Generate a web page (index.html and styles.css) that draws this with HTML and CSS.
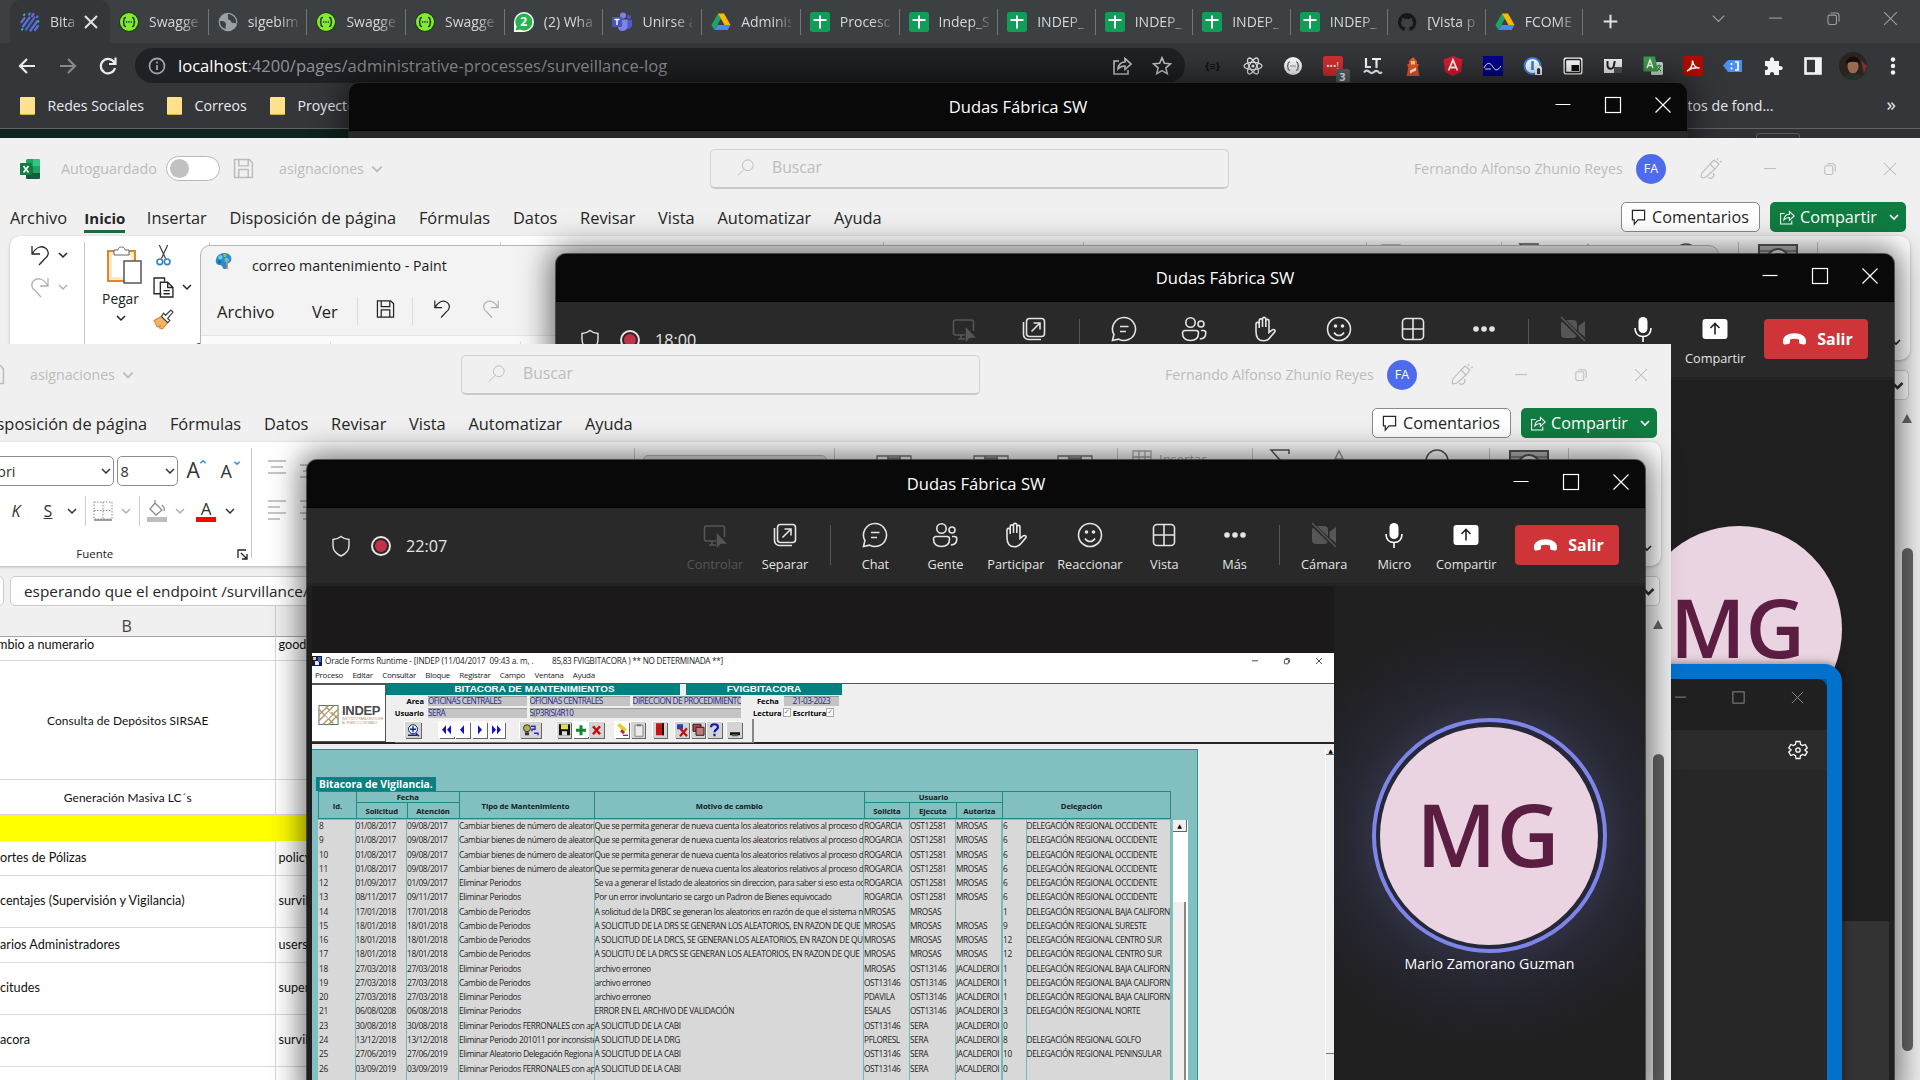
FILE: index.html
```html
<!DOCTYPE html>
<html lang="es">
<head>
<meta charset="utf-8">
<title>Bitácora de vigilancia</title>
<link rel="stylesheet" href="styles.css">
</head>
<body>
<svg class="defs" aria-hidden="true">
  <symbol id="min" viewBox="0 0 20 20"><path d="M2.5 9.5h15"/></symbol>
  <symbol id="max" viewBox="0 0 20 20"><rect x="2.5" y="2.5" width="15" height="15"/></symbol>
  <symbol id="close" viewBox="0 0 20 20"><path d="M2.5 2.5l15 15M17.500 2.500l-15 15"/></symbol>
  <symbol id="restore" viewBox="0 0 20 20"><rect x="3.500" y="6" width="10" height="11" rx="2"/><path d="M6.500 3.500h7a3 3 0 0 1 3 3v7"/></symbol>
  <symbol id="chev" viewBox="0 0 12 12"><path d="M2 4l4 4 4-4"/></symbol>
  <symbol id="back" viewBox="0 0 20 20"><path d="M18 10H3M10 3l-7 7 7 7"/></symbol>
  <symbol id="reload" viewBox="0 0 20 20"><path d="M16.500 7A7.200 7.200 0 1 0 17 12M17.500 1.500v6.500h-6.500"/></symbol>
  <symbol id="info" viewBox="0 0 20 20"><circle cx="10" cy="10" r="7.500"/><path d="M10 9v5M10 5.500v2"/></symbol>
  <symbol id="share" viewBox="0 0 20 20"><path d="M7 5H2v13h14v-4M6 13c0-5 4-7 7-7V2.500l6 5.500-6 5.500V10c-3 0-5 .5-7 3z"/></symbol>
  <symbol id="star" viewBox="0 0 20 20"><path d="M10 1.800l2.400 5.500 6 .5-4.500 4 1.300 5.900L10 14.600l-5.200 3.100 1.300-5.900-4.500-4 6-.5z"/></symbol>
  <symbol id="undo" viewBox="0 0 20 22"><path d="M2 2v8h8M2.500 9.500C6 3 12 1 16 4.500s2 8-1 10L9 21"/></symbol>
  <symbol id="redo" viewBox="0 0 20 22"><path d="M18 2v8h-8M17.500 9.500C14 3 8 1 4 4.500s-2 8 1 10L11 21"/></symbol>
  <symbol id="save" viewBox="0 0 20 20"><path d="M1.500 1.500h14l3 3v14h-17zM5.500 1.500v6h9v-6M5.500 18v-7h9v7"/></symbol>
  <symbol id="search" viewBox="0 0 20 20"><circle cx="12" cy="7.500" r="6"/><path d="M8 12l-7 7"/></symbol>
  <symbol id="pen" viewBox="0 0 22 22"><path d="M10 6l5 5-9 8-4 1-1-1 1-4zM10 6l4-4M15 11l4-5-5-4M8 19a3 3 0 0 0 5-4M17 2l1-2M20 4l2-1"/></symbol>
  <symbol id="bubble" viewBox="0 0 16 18"><path d="M1.500 1.500h13v10h-7l-4 4.500v-4.500h-2z"/></symbol>
  <symbol id="shield" viewBox="0 0 20 22"><path d="M10 1.500c2.500 2 5 3 8 3v6c0 5-3.500 8.500-8 10.500C5.500 19 2 15.500 2 10.500v-6c3 0 5.500-1 8-3z"/></symbol>
  <symbol id="control" viewBox="0 0 26 26"><path d="M14 19H4.500a2 2 0 0 1-2-2V6a2 2 0 0 1 2-2h16a2 2 0 0 1 2 2v9M10 19v4M7 23h7"/><path d="M15.500 13v11l3-3h4.500z" fill="currentColor"/></symbol>
  <symbol id="popout" viewBox="0 0 26 26"><rect x="5.500" y="2.500" width="18" height="18" rx="3"/><path d="M2.500 6v12.500a5 5 0 0 0 5 5H20M10.500 15.500l8-8M12.500 7h6.500v6.500"/></symbol>
  <symbol id="chat" viewBox="0 0 26 26"><path d="M13 1.500a11.500 11.500 0 1 1-5.500 21.600L1.500 24.500l1.400-6A11.500 11.500 0 0 1 13 1.500zM9 10.500h8.500M9 15.500h6"/></symbol>
  <symbol id="people" viewBox="0 0 26 26"><circle cx="9.500" cy="6.500" r="4.700"/><circle cx="20" cy="8" r="3"/><path d="M1.500 17a2.500 2.500 0 0 1 2.500-2.500h11a2.500 2.500 0 0 1 2.500 2.500c0 5-3 7.500-8 7.500s-8-2.500-8-7.500zM20 14.500h2.500a2.300 2.300 0 0 1 2.300 2.300c0 4-2 6.200-6 6.200"/></symbol>
  <symbol id="hand" viewBox="0 0 26 26"><path d="M4 15.500V8a1.600 1.600 0 0 1 3.200 0v4V4.500a1.600 1.600 0 0 1 3.300 0V11 3a1.600 1.600 0 0 1 3.300 0v8V5a1.600 1.600 0 0 1 3.200 0v11.500l3.200-2.600c1.400-1 3.300 0 2.800 1.600L18 21.500c-1.500 2.300-3.500 3.200-6.500 3.200-5 0-7.500-3-7.500-9.200z"/></symbol>
  <symbol id="smile" viewBox="0 0 26 26"><circle cx="13" cy="13" r="11.500"/><path d="M8 16.500c2.500 4 7.500 4 10 0"/><circle cx="9.500" cy="10" r="1" fill="currentColor"/><circle cx="16.500" cy="10" r="1" fill="currentColor"/></symbol>
  <symbol id="gridview" viewBox="0 0 26 26"><rect x="2.500" y="2.500" width="21" height="21" rx="3.500"/><path d="M13 2.500v21M2.500 13h21"/></symbol>
  <symbol id="dots" viewBox="0 0 26 26"><g fill="currentColor" stroke="none"><circle cx="5" cy="13" r="2.800"/><circle cx="13" cy="13" r="2.800"/><circle cx="21" cy="13" r="2.800"/></g></symbol>
  <symbol id="camera" viewBox="0 0 26 26"><path d="M4 4h9a4 4 0 0 1 4 4v10a4 4 0 0 1-4 4H5a4 4 0 0 1-4-4V7zM18.500 10L25 5v16l-6.500-5z" fill="currentColor" stroke="none"/><path d="M1 2l24 23" stroke="#292929" stroke-width="4"/><path d="M1 1l24 24"/></symbol>
  <symbol id="mic" viewBox="0 0 26 26"><rect x="8.500" y="1" width="9" height="16" rx="4.500" fill="currentColor" stroke="none"/><path d="M5 12c0 5 3 8.500 8 8.500s8-3.500 8-8.500M13 21v5"/></symbol>
  <symbol id="upload" viewBox="0 0 26 26"><rect x="0.500" y="3" width="25" height="20" rx="3" fill="#fff" stroke="none"/><path d="M13 18.500V8M8.500 12L13 7.500l4.500 4.500" stroke="#222"/></symbol>
  <symbol id="hangup" viewBox="0 0 26 14"><path d="M13 1C6 1 1 4.500 1 9c0 3 .8 4 2.500 3.800l3-.6c1.300-.3 1.700-1 1.800-2.200V7.500c3-1 6.400-1 9.400 0V10c.1 1.200.5 1.900 1.800 2.200l3 .6C24.200 13 25 12 25 9c0-4.500-5-8-12-8z" fill="#fff" stroke="none"/></symbol>
  <symbol id="gear" viewBox="0 0 20 20"><path d="M8 1.500h4l.5 2.800 2 1.200 2.700-1 2 3.500-2.200 1.800v.4l2.200 1.800-2 3.500-2.700-1-2 1.200-.5 2.800H8l-.5-2.800-2-1.200-2.700 1-2-3.500L3 10.200v-.4L.8 8l2-3.500 2.700 1 2-1.200z"/><circle cx="10" cy="10" r="2.200"/></symbol>
  <symbol id="excel" viewBox="0 0 20 20"><rect x="6" width="14" height="20" rx="1.500" fill="#21a366"/><path d="M13 0h5.500A1.500 1.500 0 0 1 20 1.500V7h-7z" fill="#33c481"/><path d="M6 7h7v7H6z" fill="#107c41"/><path d="M6 14h14v4.500a1.500 1.500 0 0 1-1.500 1.500h-11A1.500 1.500 0 0 1 6 18.500z" fill="#185c37"/><rect y="4" width="12" height="12" rx="1" fill="#107c41"/><path d="M3.500 7l5 6.500M8.500 7l-5 6.500" stroke="#fff" stroke-width="1.700"/></symbol>
  <symbol id="swagger" viewBox="0 0 20 20"><circle cx="10" cy="10" r="10" fill="#1c3d10"/><circle cx="10" cy="10" r="9" fill="#85ea2d"/><path d="M7 5.500c-1.500 0-2 .6-2 2s0 2.500-1.200 2.500C5 10 5 11 5 12.500s.5 2 2 2M13 5.500c1.500 0 2 .6 2 2s0 2.500 1.200 2.500C15 10 15 11 15 12.500s-.5 2-2 2M7 10h1.300M9.300 10h1.400M11.700 10H13" stroke="#173647" stroke-width="1.400"/></symbol>
  <symbol id="globe" viewBox="0 0 20 20"><circle cx="10" cy="10" r="9.300" fill="#9aa0a6"/><path d="M2 9c4-.5 6 1 6 3s-1 2 0 5c-4-1-6.500-4-6-8zM10 2c-1 2 1 3 0 4.500s3 1 3 3 3 1 5 2c1-5-3-9-8-9.500z" fill="#3c4043"/></symbol>
  <symbol id="bita" viewBox="0 0 20 20"><g stroke-width="2.200" stroke-linecap="round"><path d="M1.500 10l3-4M3 14.500l6.500-9M9 2.500l1-1" stroke="#5b6fd8"/><path d="M6 17.500l8.500-12" stroke="#4c63d9"/><path d="M10.500 18.500l6.500-9" stroke="#5b6fd8"/><path d="M12 4l1.500-2M17 5l.5-.7M15 18l3-4" stroke="#5b6fd8"/><path d="M18 9.500l.3-.4M4 3l.4-.5M2 17.500l.3-.3" stroke="#28b7a0"/></g></symbol>
  <symbol id="whatsapp" viewBox="0 0 20 20"><path d="M0 20V10a10 10 0 1 1 10 10z" fill="#fff"/><path d="M1.500 18.500l1.200-4A8.500 8.500 0 1 1 6 17.500z" fill="#25b34b"/></symbol>
  <symbol id="teams" viewBox="0 0 20 20"><circle cx="11" cy="3.500" r="3" fill="#7b83eb"/><circle cx="17" cy="5" r="2" fill="#5059c9"/><path d="M14 8h6v6a4 4 0 0 1-6 2z" fill="#5059c9"/><path d="M6 7.500h9.500V15a5 5 0 0 1-9.500 1z" fill="#7b83eb"/><rect y="5" width="10" height="10" rx="1" fill="#4b53bc"/><path d="M2.500 7.500h5M5 7.500v5.500" stroke="#fff" stroke-width="1.400"/></symbol>
  <symbol id="drive" viewBox="0 0 20 20"><path d="M7 1.500L0.500 13l3 5L10 6.500z" fill="#1fa463"/><path d="M7 1.500h6L19.500 13h-6z" fill="#ffba00"/><path d="M3.500 18l3-5h13l-3 5z" fill="#4688f4"/></symbol>
  <symbol id="sheets" viewBox="0 0 20 20"><rect width="20" height="20" rx="2.500" fill="#0f9d58"/><path d="M10 3.500v13M3.500 8h13" stroke="#fff" stroke-width="2"/></symbol>
  <symbol id="github" viewBox="0 0 20 20"><path d="M10 1a9.300 9.300 0 0 0-3 18c.5.100.7-.2.700-.5v-1.800c-2.600.6-3.200-1.100-3.200-1.100.9.300 1.500 1.800 3.400 1.200 0-.8.300-1.100.5-1.300-2.500-.3-4.300-1.300-4.300-4.400 0-1 .4-1.900 1-2.500-.1-.3-.4-1.300.1-2.600 0 0 .9-.2 2.600 1a9 9 0 0 1 4.600 0c1.700-1.200 2.600-1 2.600-1 .5 1.300.2 2.300.1 2.600.6.600 1 1.500 1 2.500 0 3.100-1.900 4.100-4.300 4.400.4.300.7.900.7 1.800v1.200c0 .3.200.6.700.5A9.300 9.300 0 0 0 10 1z" fill="#15181b"/></symbol>
</svg>

<main class="desktop">
  <section class="chrome">
    <div class="tabstrip">
      <div class="tab tab-active"><svg class="ico20"><use href="#bita"/></svg><span class="tab-text">Bita</span><svg class="ico16 line tab-x"><use href="#close"/></svg></div>
      <div class="tabs" id="tabs"></div>
      <svg class="plus line" viewBox="0 0 20 20"><path d="M10 2v16M2 10h16"/></svg>
      <div class="chrome-ctl">
        <svg class="line"><use href="#chev"/></svg><svg class="line"><use href="#min"/></svg><svg class="line"><use href="#restore"/></svg><svg class="line"><use href="#close"/></svg>
      </div>
    </div>
    <div class="navbar">
      <svg class="nav line"><use href="#back"/></svg>
      <svg class="nav line nav-fwd"><use href="#back"/></svg>
      <svg class="nav line"><use href="#reload"/></svg>
      <div class="omnibox">
        <svg class="ico20 line dim"><use href="#info"/></svg>
        <span class="url"><b>localhost</b>:4200/pages/administrative-processes/surveillance-log</span>
        <svg class="ico20 line omni-share"><use href="#share"/></svg>
        <svg class="ico20 line omni-star"><use href="#star"/></svg>
      </div>
      <div class="exts">
        <span class="ext ext-json">{≡}</span>
        <svg class="ext" viewBox="0 0 20 20"><g fill="none" stroke="#e8eaed" stroke-width="1.300"><ellipse cx="10" cy="10" rx="9" ry="3.600"/><ellipse cx="10" cy="10" rx="9" ry="3.600" transform="rotate(60 10 10)"/><ellipse cx="10" cy="10" rx="9" ry="3.600" transform="rotate(120 10 10)"/></g><circle cx="10" cy="10" r="1.600" fill="#e8eaed"/></svg>
        <svg class="ext" viewBox="0 0 20 20"><circle cx="10" cy="10" r="9" fill="#fff"/><path d="M7 6c-1.500 0-2 .6-2 2s0 2-1 2c1 0 1 1 1 2.300s.5 1.900 2 1.900M13 6c1.500 0 2 .6 2 2s0 2 1 2c-1 0-1 1-1 2.300s-.5 1.900-2 1.900M7.500 10h1M9.500 10h1M11.500 10h1" fill="none" stroke="#333"/></svg>
        <span class="ext ext-red">•••!<i class="badge">3</i></span>
        <svg class="ext" viewBox="0 0 20 20"><path d="M3 2v9h5M9 3h9M13.500 3v9M1 16.500c2-3 4-2 5.500-.5s3 1.500 4.500 0 3.500-1.500 4.500 0 2 1.500 3.500 0" fill="none" stroke="#fff" stroke-width="2.200"/></svg>
        <svg class="ext" viewBox="0 0 20 20"><path d="M6 5l4-4 4 4v3h1.500v2.500H14.500L16.500 20h-13l2-9.500H4.500V8H6z" fill="#f05a28"/><path d="M7 14.500l6-3v3l-6 3z" fill="#fff"/><rect x="8" y="5" width="4" height="3.500" fill="#ffd27a"/></svg>
        <svg class="ext" viewBox="0 0 20 20"><path d="M10 0l9.500 3.500L18 16l-8 4-8-4L.5 3.500z" fill="#dd1b2f"/><path d="M5.500 14.500L10 4l4.500 10.500M7.500 11.500h5" fill="none" stroke="#fff" stroke-width="1.800"/></svg>
        <svg class="ext" viewBox="0 0 20 20"><rect width="20" height="20" fill="#00008c"/><path d="M1 12c3-6 6-6 9-1s5 3 8-1M2 13h6" fill="none" stroke="#fff"/></svg>
        <svg class="ext" viewBox="0 0 20 20"><circle cx="9.500" cy="10" r="8" fill="#fff" stroke="#3a86e8" stroke-width="2"/><path d="M9.500 5v9" stroke="#3a86e8" stroke-width="2.600"/><path d="M12 19v-6a3.500 3.500 0 0 1 7 0v6z" fill="#fff"/><path d="M14 13.500a1.600 1.600 0 0 1 3.200 0V18H14z" fill="#2a3a55"/></svg>
        <svg class="ext" viewBox="0 0 20 20"><rect x=".5" y="1.500" width="19" height="17" rx="2" fill="#fff"/><rect x="2.500" y="3.500" width="15" height="13" rx="1" fill="#fff" stroke="#222" stroke-width="1.400"/><rect x="8.500" y="9" width="7.500" height="6" fill="#111"/></svg>
        <svg class="ext" viewBox="0 0 20 20"><rect x="1" y="3" width="18" height="14" fill="#f1f1f1"/><path d="M4.500 5v4c0 5 6 5 6.500 0l.8-4" fill="none" stroke="#222" stroke-width="2"/><path d="M11 11h8v6h-8z" fill="#555"/></svg>
        <svg class="ext" viewBox="0 0 20 20"><rect x="8" y="6" width="12" height="13" rx="1.500" fill="#c9dfce"/><path d="M.5.500H12l3 15H.5z" fill="#3f9e4d"/><path d="M4 12L7 4l3 8M5 9.500h4" fill="none" stroke="#fff" stroke-width="1.400"/><path d="M13.500 10h5M16 8.500v1.500M14.500 15l3-5M14 11l4 4" stroke="#2b7d39"/></svg>
        <svg class="ext" viewBox="0 0 20 20"><rect width="20" height="20" rx="3" fill="#b30b00"/><path d="M4 15c3-1 6-6 5.500-10.500.5 5 4 8 7 7.500-4-.5-9 .5-12.500 3z" fill="none" stroke="#fff" stroke-width="1.500"/></svg>
        <svg class="ext" viewBox="0 0 20 20"><path d="M0 9.500l5-5.500h14v12H5z" fill="#4d8ff0"/><path d="M8.500 7v2M8.500 11.500v2M12 6h3v8h-3" fill="none" stroke="#fff" stroke-width="1.700"/></svg>
        <svg class="ext" viewBox="0 0 20 20"><path d="M2 5h5c-1-5 5-5 4 0h5v5c5-1 5 5 0 4v5h-5c1-4-5-4-4 0H2v-5c4 1 4-5 0-4z" fill="#f1f3f4"/></svg>
        <svg class="ext" viewBox="0 0 20 20"><rect x="2.500" y="2.500" width="15" height="15" fill="none" stroke="#f1f3f4" stroke-width="2.600"/><path d="M12 2h6v16h-6z" fill="#f1f3f4"/></svg>
        <svg class="ext ext-face" viewBox="0 0 28 28"><circle cx="14" cy="14" r="14" fill="#2b2320"/><path d="M22 8l6 6-3 8z" fill="#7a3328"/><ellipse cx="14" cy="14" rx="5.500" ry="7.500" fill="#9c6a50"/><path d="M7 12c0-10 14-10 14 0-3-3-10-3-14 0z" fill="#120e0d"/><path d="M5 25c4-5 14-5 18 0a14 14 0 0 1-18 0z" fill="#26302b"/></svg>
        <svg class="ext" viewBox="0 0 20 20"><g fill="#f1f3f4"><circle cx="10" cy="3.500" r="2.200"/><circle cx="10" cy="10" r="2.200"/><circle cx="10" cy="16.500" r="2.200"/></g></svg>
      </div>
    </div>
    <div class="bookmarks">
      <i class="folder"></i><span class="bm bm-a">Redes Sociales</span>
      <i class="folder"></i><span class="bm bm-b">Correos</span>
      <i class="folder"></i><span class="bm">Proyecto</span>
      <span class="bm bm-right">tos de fond...</span><span class="bm-more">»</span>
    </div>
    <div class="page-strip"><i class="page-green"></i><i class="page-box"></i></div>
  </section>

  <section class="win teams teams-back" data-teams="bar"></section>

  <section class="win excel excel-back" data-excel="back"></section>

  <section class="win paint">
    <div class="paint-title">
      <svg class="ico20" viewBox="0 0 20 20"><path d="M10 1c6 0 9 4 8 8s-4 3-4 5 0 5-3 5-2-3-4-4-5 0-6-4S4 1 10 1z" fill="#2c8ccb"/><circle cx="6" cy="6" r="2.300" fill="#5fd3e8"/><circle cx="11" cy="4" r="1.800" fill="#93c83e"/><circle cx="5" cy="11" r="1.800" fill="#1b5fa8"/><circle cx="13" cy="9" r="2.500" fill="#55c4f5"/><path d="M13 9l1 10" stroke="#e0913a" stroke-width="1.500"/></svg>
      <span>correo mantenimiento - Paint</span>
    </div>
    <div class="paint-menu">
      <span class="pm-a">Archivo</span><span class="pm-v">Ver</span><i></i><svg class="ico20 line"><use href="#save"/></svg><i></i><svg class="pm-arrow line"><use href="#undo"/></svg><svg class="pm-arrow line faint"><use href="#redo"/></svg>
    </div>
    <div class="paint-body"><i></i><i></i></div>
  </section>

  <section class="win teams teams-mid" data-teams="full">
    <div class="call">
      <div class="side side-plain">
        <div class="avatar">MG</div>
        <div class="tile"></div>
      </div>
    </div>
  </section>

  <section class="win snip">
    <div class="snip-title"><svg class="line"><use href="#min"/></svg><svg class="line"><use href="#max"/></svg><svg class="line"><use href="#close"/></svg></div>
    <div class="snip-bar"><svg class="ico20 line"><use href="#gear"/></svg></div>
  </section>

  <section class="win excel excel-front" data-excel="front"></section>

  <section class="win teams teams-front" data-teams="full">
    <div class="call">
      <div class="shared">
        <div class="oracle">
          <div class="o-title">
            <svg class="o-app" viewBox="0 0 10 10"><rect width="10" height="10" fill="#111a4a"/><path d="M1 1h3v3H1z" fill="#e8d33c"/><path d="M3 5h4v4H3z" fill="#e9e9e9"/><path d="M6 1h3v5H6z" fill="#3b62d9"/></svg>
            <span class="o-t1">Oracle Forms Runtime - [INDEP (11/04/2017&nbsp; 09:43 a. m, .</span><span>85,83 FVIGBITACORA ) ** NO DETERMINADA **]</span>
            <div class="o-ctl"><svg class="line"><use href="#min"/></svg><svg class="line"><use href="#restore"/></svg><svg class="line"><use href="#close"/></svg></div>
          </div>
          <div class="o-menu"><span>Proceso</span><span>Editar</span><span>Consultar</span><span>Bloque</span><span>Registrar</span><span>Campo</span><span>Ventana</span><span>Ayuda</span></div>
          <div class="o-head">
            <div class="o-logo">
              <svg viewBox="0 0 22 22"><rect x="1" y="1" width="20" height="20" fill="#fff" stroke="#4f6f60"/><path d="M1 11L11 1M1 17L17 1M5 21L21 5M11 21l10-10M1 5l7 7M14 8l7 7M8 2l4 4M11 15l5 5" stroke="#b5976a" stroke-width="1.500"/><path d="M7 11l4-4 4 4-4 4z" fill="#fff" stroke="#b5976a"/></svg>
              <div><b>INDEP</b><small>INSTITUTO PARA DEVOLVER<br>AL PUEBLO LO ROBADO</small></div>
            </div>
            <div class="o-info">
              <div class="o-bands"><b class="band-a">BITACORA DE MANTENIMIENTOS</b><b class="band-b">FVIGBITACORA</b></div>
              <div class="o-fields">
                <b class="lb lb-1">Area</b><span class="fd f1">OFICINAS CENTRALES</span><span class="fd f2">OFICINAS CENTRALES</span><span class="fd f3">DIRECCION DE PROCEDIMIENTO</span><b class="lb lb-2">Fecha</b><span class="fd f4">21-03-2023</span>
              </div>
              <div class="o-fields">
                <b class="lb lb-1">Usuario</b><span class="fd f1">SERA</span><span class="fd f5">S(P3R(S(4R10</span><b class="lb lb-3">Lectura</b><i class="cb">✓</i><b class="lb">Escritura</b><i class="cb">✓</i>
              </div>
              <div class="o-tools" id="tools"></div>
            </div>
          </div>
          <div class="o-body">
            <div class="o-pane">
              <b class="o-label">Bitacora de Vigilancia.</b>
              <div class="o-grid-head">
                <b class="h-id">Id.</b><b class="h-fe">Fecha</b><b class="h-so">Solicitud</b><b class="h-at">Atención</b><b class="h-ti">Tipo de Mantenimiento</b><b class="h-mo">Motivo de cambio</b><b class="h-us">Usuario</b><b class="h-s2">Solicita</b><b class="h-ej">Ejecuta</b><b class="h-au">Autoriza</b><b class="h-de">Delegación</b>
              </div>
              <div class="o-list"><div class="o-rows" id="rows"></div><div class="o-scroll"><i class="up">▲</i><i class="thumb"></i></div></div>
            </div>
            <div class="o-outer"><i class="up">▲</i><i class="thumb"></i></div>
          </div>
        </div>
      </div>
      <div class="side">
        <div class="ring"><div class="avatar">MG</div></div>
        <span class="who">Mario Zamorano Guzman</span>
      </div>
    </div>
  </section>
</main>
<script src="script.js"></script>
</body>
</html>
```
FILE: styles.css
```css
* { box-sizing: border-box; }
body { margin: 0; background: #1f1f1f; font-family: "Open Sans", "Noto Sans", sans-serif; }
.defs { position: absolute; width: 0; height: 0; }
svg { display: block; flex: none; fill: none; }
svg symbol, svg use { overflow: visible; }
.line { stroke: currentColor; stroke-width: 1.3; }
.ico20 { width: 20px; height: 20px; }
.ico16 { width: 16px; height: 16px; }
.desktop { position: relative; width: 1920px; height: 1080px; overflow: hidden; white-space: nowrap; }
.win { position: absolute; overflow: hidden; }

/* Browser */
.chrome { height: 138px; background: #35363a; color: #dfe1e5; }
.tabstrip { display: flex; align-items: center; height: 43px; background: #3c4043; font-size: 14px; padding-left: 10px; }
.tab { display: flex; align-items: center; width: 98.700px; height: 26px; border-right: 1px solid #70757a; padding-left: 9px; }
.tab:nth-child(n+10) { width: 97.500px; }
.tab .tab-text { margin-left: 10px; width: 50px; overflow: hidden; color: #d5d7da; -webkit-mask-image: linear-gradient(90deg, #000 65%, rgba(0, 0, 0, .2)); }
.tab-active { height: 43px; width: 100px; background: #35363a; border: 0; border-radius: 10px 10px 0 0; padding-left: 10px; }
.tab-active .tab-text { width: 26px; }
.tab-x { margin-left: 7px; stroke-width: 2.6; }
.tabs { display: flex; }
.wa { display: flex; align-items: center; justify-content: center; width: 20px; height: 20px; }
.wa b { position: absolute; color: #fff; font-size: 12px; }
.plus { width: 17px; height: 17px; margin-left: 19px; stroke-width: 2.4; }
.chrome-ctl { display: flex; margin-left: auto; padding: 0 0 6px; color: #9a9ea1; }
.chrome-ctl svg { width: 17px; height: 17px; margin-right: 40.5px; }
.chrome-ctl svg:first-child { stroke-width: .9; }
.chrome-ctl svg:last-child { margin-right: 21px; }
.navbar { display: flex; align-items: center; height: 45px; padding-left: 17px; }
.nav { width: 20px; height: 20px; margin-right: 20.5px; stroke-width: 2.2; color: #e8eaed; }
.nav-fwd { transform: scaleX(-1); color: #87898c; }
.omnibox { display: flex; align-items: center; width: 1050px; height: 35px; margin-left: -3.500px; border-radius: 18px; background: #202124; padding-left: 12px; }
.dim { color: #9aa0a6; stroke-width: 1.8; }
.url { margin-left: 11px; font-size: 16.6px; color: #8f9398; width: 932px; }
.url b { font-weight: 400; color: #fff; }
.omni-share, .omni-star { color: #c6c9cc; stroke-width: 1.6; }
.omni-share { margin-left: 2px; }
.omni-star { margin-left: 20px; }
.exts { display: flex; margin-left: 7.500px; align-items: center; }
.ext { width: 20px; height: 20px; margin: 0 10px; }
.ext-json { color: #111; font-size: 11px; font-weight: 700; line-height: 20px; text-align: center; }
.ext-red { position: relative; border-radius: 3px; background: #d3302f; color: #fff; font-size: 9px; line-height: 19px; text-align: center; }
.badge { position: absolute; right: -7px; top: 13px; width: 14px; height: 15px; border-radius: 3px; background: #5f6368; font: 700 11px/15px "Open Sans", sans-serif; }
.ext-face { width: 28px; height: 28px; margin: 0 6px; }
.bookmarks { display: flex; align-items: center; height: 40px; padding: 0 0 5px 20px; font-size: 14.15px; color: #e8eaed; }
.folder { width: 15px; height: 18px; background: linear-gradient(135deg, #fce397, #ffe082); border-bottom: 1px solid #dcae3c; border-radius: 1px; }
.bm { margin-left: 12.500px; }
.bm-a { width: 119.500px; }
.bm-b { width: 75.500px; }
.bm-right { margin-left: auto; width: 87px; }
.bm-more { margin: -3px 24px 0 112px; font-size: 19px; }
.page-strip { display: flex; height: 10px; border-top: 1px solid #5f6368; background: #2e3033; }
.page-green { width: 349px; background: #0c231f; }
.page-box { margin: 4px 0 0 1407px; width: 44px; height: 12px; border: 1px solid #55585b; border-radius: 3px; }

/* Meeting windows */
.teams { width: 1338px; border-radius: 10px 10px 0 0; background: #1f1f1f; color: #fff; box-shadow: 0 0 30px 6px rgba(0, 0, 0, .55), 0 0 0 1px rgba(60, 60, 60, .7); }
.teams-back { left: 349px; top: 83px; height: 60px; }
.teams-mid { left: 556px; top: 254px; height: 840px; }
.teams-front { left: 307px; top: 460px; height: 640px; }
.t-title { display: flex; align-items: center; height: 48px; background: #090909; border-bottom: 1px solid #000; font-size: 16.6px; }
.t-title span { flex: 1; text-align: center; padding-left: 150px; }
.t-title svg { width: 20px; height: 20px; margin: 0 14px 3px 16px; stroke-width: 1.2; }
.t-bar { display: flex; height: 75px; background: #292929; color: #e4e4e4; }
.t-left { display: flex; align-items: center; width: 373px; padding-left: 24px; font-size: 16.200px; }
.t-left svg { width: 20px; height: 22px; stroke-width: 1.4; }
.rec { width: 20px; height: 20px; margin: 0 15px 0 20px; border: 2px solid #e6e6e6; border-radius: 50%; background: #c4314b; box-shadow: inset 0 0 0 2px #292929; }
.t-btn { display: flex; flex-direction: column; align-items: center; width: 70px; padding-top: 14px; font-size: 12.75px; }
.t-btn svg { width: 26px; height: 26px; margin-bottom: 7px; stroke-width: 1.6; }
.t-off { color: #565656; }
.t-on svg { color: #fff; }
.w71 { width: 71px; }
.w76 { width: 77px; }
.w72 { width: 72px; }
.w68 { width: 68.500px; }
.w74 { width: 74px; }
.t-div { width: 1px; height: 40px; margin: 17px 9.700px 0; background: #565656; }
.t-leave { display: flex; align-items: center; width: 104px; height: 40px; margin: 17px 0 0 12px; padding-left: 18px; border-radius: 4px; background: #cf3438; color: #fff; font-weight: 700; font-size: 16px; }
.t-leave svg { width: 25px; height: 14px; margin-right: 10px; }
.call { display: flex; height: 560px; padding-left: 5px; border-top: 3px solid #242424; }
.side { width: 311px; display: flex; flex-direction: column; align-items: center; padding-top: 132px; background: radial-gradient(circle at 155px 249px, #333449 0, #2f3042 115px, #282834 140px, #222228 180px, #1f1f1f 225px); }
.ring { width: 235px; height: 235px; border: 4px solid #7f85e8; border-radius: 50%; padding: 4.500px; background: #262738; flex: none; margin-left: -1px; }
.avatar { width: 218px; height: 218px; border-radius: 50%; background: #ebd4e1; color: #5b1e42; font-weight: 600; font-size: 87px; line-height: 212px; text-align: center; padding-right: 2px; }
.who { margin-top: 1px; font-size: 14.2px; line-height: 20px; }
.side-plain { margin-left: 1022px; padding-top: 146px; background: none; }
.side-plain .avatar { width: 206px; height: 206px; line-height: 201px; font-size: 82px; flex: none; }
.tile { align-self: stretch; margin: 189px 5px 0 0; height: 170px; flex: none; background: #333; }

/* Snipping tool window */
.snip { left: 1600px; top: 664px; width: 242px; height: 440px; border: 15px solid #0072cd; border-radius: 18px; background: #272727; box-shadow: 0 0 8px rgba(0, 0, 0, .5); }
.snip::before { content: ""; position: absolute; inset: 0; border-radius: 9px; box-shadow: 0 0 8px rgba(0, 0, 0, .6), 0 0 0 12px #0072cd; pointer-events: none; }
.snip-title { display: flex; justify-content: flex-end; align-items: center; height: 51px; padding: 0 22.500px 15px 0; gap: 43.500px; background: #202020; color: #8a8a8a; border-radius: 9px 9px 0 0; }
.snip-title svg { width: 15px; height: 15px; }
.snip-bar { height: 40px; background: #2b2b2b; padding: 10px 19px 0 0; color: #fff; }
.snip-bar svg { margin-left: auto; }

/* Paint window */
.paint { left: 200px; top: 245px; width: 1519px; height: 120px; border: 1px solid #b7b7b7; border-radius: 10px 10px 0 0; background: #f3f3f3; color: #1b1b1b; }
.paint-title { display: flex; align-items: center; height: 38px; padding: 0 0 0 14px; font-size: 14.2px; }
.paint-title svg { width: 18px; height: 18px; margin-top: -9px; }
.paint-title span { margin: 0 0 0 19px; }
.paint-menu { display: flex; align-items: center; height: 52px; padding: 3px 0 0 16px; font-size: 16.5px; border-bottom: 1px solid #e3e3e3; color: #222; }
.pm-a { width: 95px; }
.pm-v { width: 45px; }
.paint-menu i { width: 1px; height: 28px; background: #dcdcdc; }
.paint-menu .ico20 { width: 19px; margin: -5px 17.500px 0; }
.pm-arrow { width: 18px; height: 21px; margin: -6px 11px 0 20px; }
.faint { color: #b0b0b0; }
.paint-body { display: flex; height: 40px; background: #fafafa; padding-top: 5px; }
.paint-body i { width: 1px; background: #ddd; margin-left: 129px; }
.paint-body i + i { margin-left: 189px; }

/* Spreadsheet windows */
.excel { width: 1920px; background: #f0f0f0; color: #262626; }
.excel-back { left: 0; top: 138px; height: 942px; }
.excel-front { left: -249px; top: 344px; height: 736px; }
.x-title { display: flex; align-items: center; height: 62px; padding: 0 0 1px 20px; color: #bcbcbc; font-size: 14.300px; }
.x-title .auto { width: 105px; margin-left: 21px; }
.toggle { width: 54px; height: 25px; border: 1px solid #b8b8b8; border-radius: 13px; background: #fff; padding: 2px 3px; }
.toggle i { display: block; width: 19px; height: 19px; border-radius: 50%; background: #c1c1c1; }
.x-save { width: 21px; height: 21px; margin: 0 25px 0 13px; stroke-width: 1.4; }
.x-name { width: 91px; font-size: 14.200px; }
.x-chev { width: 14px; height: 14px; stroke-width: 1.6; }
.x-search { display: flex; align-items: center; width: 519px; height: 40px; margin: 0 0 0 326px; padding: 0 0 2px 26px; border: 1px solid #d2d2d2; border-bottom: 2px solid #cacaca; border-radius: 5px; font-size: 15.700px; }
.x-search svg { width: 18px; height: 19px; margin-right: 17px; stroke-width: 1.1; }
.x-user { width: 222px; margin-left: 185px; font-size: 14.150px; }
.x-fa { width: 30px; height: 30px; border-radius: 50%; background: #4f6bed; color: #fff; text-align: center; line-height: 29px; font-size: 12.5px; }
.x-pen { width: 22px; height: 22px; margin: 0 0 0 34px; stroke-width: 1.1; }
.x-ctl { width: 16px; height: 16px; margin-left: 40px; }
.x-ctl + .x-ctl { margin-left: 44px; }
.x-tabs { display: flex; align-items: center; height: 36px; padding-left: 10px; font-size: 16.400px; }
.x-tabs span { margin: -2px 22.700px 0 0; }
.x-tabs .active { font-weight: 700; font-size: 15px; padding: 5px 0 2px; border-bottom: 3px solid #1a6b3f; margin: 0 21.500px 0 -5.500px; }
.x-btn { display: flex; align-items: center; height: 30px; border-radius: 5px; font-size: 16.200px; }
.x-comment { width: 139px; margin: -2px 0 0 auto; border: 1px solid #8a8a8a; background: #fff; padding-left: 9px; }
.x-comment svg { width: 15px; height: 17px; margin-right: 6px; }
.x-share { width: 136px; margin: -2px 14px 0 10px; background: #107c41; color: #fff; padding-left: 9px; }
.x-share svg { width: 16px; height: 17px; margin-right: 5px; }
.x-share .sm { width: 12px; height: 12px; margin: 0 0 0 11px; stroke-width: 1.7; }
.ribbon { display: flex; height: 124px; margin: 0 10px; border-radius: 10px; background: #fff; box-shadow: 0 1px 3px rgba(0, 0, 0, .25); overflow: hidden; }
.grp { position: relative; display: flex; flex-direction: column; padding-top: 6px; height: 116px; flex: none; font-size: 11.500px; }
.grp::after { content: ""; position: absolute; right: 0; top: 6px; bottom: 0; width: 1px; background: #c9c9c9; }
.grp .lbl { position: relative; top: 3px; margin-top: auto; color: #222; line-height: 14px; display: flex; justify-content: center; align-items: center; }
.sm { width: 12px; height: 12px; stroke-width: 1.5; }
.g-undo { width: 75px; }
.g-undo .r { display: flex; align-items: center; padding-left: 20px; height: 32px; gap: 7px; margin-top: -3px; margin-bottom: 3px; }
.g-undo .r svg:first-child { width: 20px; height: 22px; }
.g-clip { width: 124.500px; }
.g-clip .cols { display: flex; }
.paste { width: 71px; display: flex; flex-direction: column; align-items: center; font-size: 13.800px; padding-top: 4px; line-height: 19px; color: #222; }
.paste > svg:first-child { width: 36px; height: 38px; margin-left: 6px; margin-bottom: 5px; }
.paste .sm { margin-top: 4px; }
.tools { display: flex; flex-direction: column; gap: 10px; padding: 2px 0 0 0; margin-left: -3px; }
.tools div { display: flex; align-items: center; height: 22px; gap: 7px; }
.tools div svg:first-child { width: 21px; height: 21px; }
.g-clip .lbl { justify-content: flex-start; padding-left: 13px; }
.launch { width: 11px; height: 11px; }
.g-clip .launch { margin-left: 28px; }
.g-font { width: 291.500px; }
.g-font .r1 { display: flex; align-items: center; padding: 8px 0 0 8px; font-size: 14.500px; color: #333; height: 38px; }
.combo { display: flex; align-items: center; justify-content: space-between; height: 30px; border: 1px solid #8c8c8c; border-radius: 5px; padding: 0 1px 0 3px; }
.combo.a { width: 145px; margin-right: 3px; }
.combo.b { width: 61px; }
.bigA { position: relative; width: 19px; font-size: 21px; margin: -3px 0 0 9px; line-height: 26px; }
.smA { position: relative; width: 16px; font-size: 18px; margin: 0 0 0 15px; line-height: 26px; }
.bigA svg, .smA svg { position: absolute; left: 12px; top: 1px; width: 8px; height: 8px; stroke: #2f8fd0; stroke-width: 2.2; }
.bigA svg { transform: scaleY(-1); }
.g-font .r2 { display: flex; align-items: center; height: 40px; margin-top: 5px; font-size: 16px; color: #333; }
.g-font .r2 > i { width: 1px; height: 30px; margin-left: 6.500px; background: #ccc; }
.k { width: 24px; margin-left: 43.500px; font-style: italic; text-align: center; }
.u { width: 24px; margin-left: 8px; text-decoration: underline; text-align: center; }
.c1 { margin-left: 6px; }
.c2 { margin-left: 7.500px; }
.bord, .fill, .fcol { width: 20px; height: 22px; margin-left: 7px; }
.r2 .fcol { margin-left: 10px; text-align: center; font-size: 17px; line-height: 17px; border-bottom: 5px solid #f00; }
.g-font .lbl { padding-right: 23px; }
.g-font .lbl .launch { position: absolute; right: 4px; }
.g-al { width: 383px; }
.g-al > svg { width: 60px; height: 80px; margin: 12px 0 0 15px; stroke: #8d8d8d; stroke-width: 1.200; }
.g-num { width: 200px; }
.g-num i { height: 30px; margin: 7px 8px; border: 1px solid #bbb; border-radius: 5px; background: #e5e5e5; }
.g-sty { width: 283px; }
.g-sty div { display: flex; padding: 7px 0 0 41px; gap: 61px; }
.g-sty svg { width: 36px; height: 36px; stroke: #777; }
.g-sty svg + svg + svg { margin-left: -13px; }
.g-cell { width: 135px; }
.g-cell div { display: flex; align-items: center; gap: 7px; padding: 0 0 0 14px; font-size: 13px; line-height: 22px; color: #aaa; }
.g-edit { width: 237px; }
.g-edit div { display: flex; gap: 34px; padding-left: 14px; }
.g-edit svg { width: 26px; height: 30px; stroke: #555; stroke-width: 1.500; }
.g-edit svg:last-child { margin-left: 37px; }
.g-pic { width: 79px; }
.g-pic svg { width: 40px; height: 32px; margin: 2px 0 0 19px; }
.collapse { margin: 100px 8px 0 auto; width: 12px; height: 12px; stroke-width: 1.600; }
.formula { display: flex; height: 30px; margin: 10px 11px 0 10px; font-size: 15.330px; align-items: center; }
.f-name { width: 243px; height: 30px; border: 1px solid #ccc; border-radius: 5px; background: #fff; }
.f-text { flex: 1; display: flex; align-items: center; height: 30px; margin-left: 6px; border: 1px solid #ccc; border-radius: 5px; background: #fff; padding: 0 3px 0 13px; justify-content: space-between; }
.f-text svg { width: 15px; height: 15px; stroke-width: 2; color: #333; }
.sheet { display: flex; height: 600px; }
.cells { width: 1895px; overflow: hidden; }
.colhead { display: grid; grid-template-columns: 524.500px 1fr; height: 31px; border-bottom: 1px solid #a5a5a5; font-size: 16px; line-height: 40px; text-align: center; color: #444; }
.colhead span:first-child { padding-left: 228px; border-right: 1px solid #ccc; }
.row { display: grid; grid-template-columns: 524.500px 1fr; border-bottom: 1px solid #d9d9d9; background: #fff; font: 12.650px/16px "Lato", sans-serif; color: #111; align-items: center; }
.row span { height: 100%; display: flex; align-items: center; }
.row:nth-child(2) span { padding: 0 0 11px; }
.row span:first-child { border-right: 1px solid #d9d9d9; padding-left: 249px; }
.row span + span, .row:nth-child(2) span + span { padding-left: 3px; }
.row:nth-child(2) span:first-child { padding-left: 246px; }
.row .c:first-child { justify-content: center; padding: 1.500px 0 0 230px; font-size: 11.950px; letter-spacing: .05px; }
.row.y span, .row.y { background: #ff0; border-color: #ff0; }
.vscroll { flex: 1; padding: 10px 0 0 7px; }
.vscroll b { display: block; width: 0; border: 5.500px solid transparent; border-bottom: 9px solid #666; border-top: 0; margin-top: 4px; }
.vscroll i { display: block; width: 11px; height: 503px; margin-top: 125px; border-radius: 6px; background: #666; }

/* Shared Oracle form */
.shared { width: 1022px; padding-top: 67px; background: #1b191a; overflow: hidden; }
.oracle { height: 440px; background: #fff; color: #222; font-size: 7.660px; }
.o-title { display: flex; align-items: center; height: 15px; }
.o-app { width: 10px; height: 10px; margin-right: 3px; }
.o-title span { font-size: 8.200px; letter-spacing: -.27px; }
.o-title .o-t1 { width: 227px; letter-spacing: -.15px; }
.o-ctl { display: flex; margin-left: auto; }
.o-ctl svg { width: 8px; height: 8px; margin-right: 24px; stroke-width: 2; }
.o-ctl svg:last-child { margin-right: 11px; }
.o-menu { display: flex; height: 15px; align-items: center; padding: 0 0 2px 3px; gap: 9.300px; font-size: 8px; letter-spacing: -.25px; }
.o-head { display: flex; height: 61px; border-top: 1.500px solid #555; border-bottom: 2px solid #2a2226; background: #efefef; }
.o-logo { display: flex; align-items: center; gap: 3px; width: 74px; background: #fff; border: 1px solid #555; border-width: 1px 1px 1px 0; padding: 4px 0 0 6px; color: #4a4a4a; }
.o-logo svg { width: 21px; height: 22px; }
.o-logo b { display: block; font: 700 13px/12px "Liberation Sans", sans-serif; letter-spacing: -.3px; }
.o-logo small { display: block; font: 3px/3.500px "Liberation Sans", sans-serif; color: #b5976a; margin-top: 1px; }
.o-info { width: 470px; }
.o-bands { display: flex; gap: 6px; height: 10.500px; color: #fff; font: 700 9.900px/10px "Liberation Sans", sans-serif; text-align: center; }
.o-bands b { background: #008080; }
.band-a { width: 294px; padding-left: 3px; }
.band-b { width: 156px; }
.o-fields { display: flex; align-items: center; height: 12px; }
.lb { font-size: 7.500px; color: #000; }
.lb-1 { width: 38px; text-align: right; margin-right: 4px; }
.lb-2 { margin: 0 5px 0 16px; }
.lb-3 { margin: 0 1px 0 12px; }
.fd { height: 10px; background: #c4c4c4; border-top: 1px solid #999; color: #2a2790; font-size: 8.200px; letter-spacing: -.5px; line-height: 8px; overflow: hidden; }
.f1 { width: 98.500px; margin-right: 3px; }
.f2 { width: 100px; margin-right: 3px; }
.f3 { width: 108.500px; }
.f4 { width: 55px; text-align: center; }
.f5 { width: 211.500px; }
.cb { width: 8px; height: 9px; border: 1px solid #aaa; background: #fff; font: 7px/7px "DejaVu Sans"; color: #777; margin-right: 2px; }
.o-tools { display: flex; align-items: center; width: 359px; height: 24px; margin-left: 9px; padding-left: 10px; border-bottom: 1px solid #777; border-right: 2px solid #888; }
.o-tools svg { width: 15px; height: 15.500px; box-shadow: 1px 1px 0 #666, -1px -1px 0 #fff; background: #d4d4d4; }
.o-body { display: flex; background: #efefef; padding-top: 5px; height: 340px; }
.o-pane { width: 886px; height: 340px; background: #82bfc1; border: 1px solid #2c9090; border-left: 0; padding: 26.500px 0 0 4px; }
.o-label { display: block; width: 120px; height: 14.500px; background: #0b8080; color: #fff; font-size: 10.300px; line-height: 14px; padding-left: 3px; }
.o-grid-head { display: grid; width: 853px; height: 28px; margin: 0 0 0 2px; grid-template: 11px 17px / 38px 50.500px 52px 135px 270.500px 45px 46.500px 46.500px 1fr; border-right: 1px solid #218787; border-bottom: 1px solid #218787; color: #142022; font-size: 7.700px; letter-spacing: -.08px; text-align: center; }
.o-grid-head b { border-left: 1px solid #218787; border-top: 1px solid #218787; display: flex; align-items: center; justify-content: center; }
.h-id { grid-area: 1 / 1 / 3 / 2; }
.h-fe { grid-area: 1 / 2 / 2 / 4; }
.h-so { grid-area: 2 / 2; }
.h-at { grid-area: 2 / 3; }
.h-ti { grid-area: 1 / 4 / 3 / 5; padding-right: 2px; }
.h-mo { grid-area: 1 / 5 / 3 / 6; }
.h-us { grid-area: 1 / 6 / 2 / 9; }
.h-s2 { grid-area: 2 / 6; }
.h-ej { grid-area: 2 / 7; }
.h-au { grid-area: 2 / 8; }
.h-de { grid-area: 1 / 9 / 3 / 10; padding-right: 10px; }
.o-list { display: flex; margin: 1px 0 0 2px; height: 262px; }
.o-rows { width: 853px; background: #d9d8d9; overflow: hidden; border-right: 1px solid #6fbcbc; }
.o-row { display: grid; grid-template-columns: 36.500px 51.500px 52px 135.500px 269.500px 46px 46px 46px 24.500px 145.500px; height: 14.270px; line-height: 12.700px; font-size: 8.300px; letter-spacing: -.36px; color: #1c1c20; }
.o-row span { overflow: hidden; border-left: 1px solid #6fbcbc; }
.o-row span:first-child { border: 0; padding-left: 1px; }
.o-row span:nth-child(9) { border-left-width: 2px; }
.o-scroll { width: 15px; margin-left: 2px; background: #fff; }
.up { display: block; width: 14px; height: 11.500px; background: #efefef; border-right: 1px solid #666; border-bottom: 1px solid #666; font: 6px/11px "DejaVu Sans"; color: #000; text-align: center; }
.o-scroll .thumb { display: block; width: 13px; height: 180px; margin-top: 70px; background: #efefef; border-right: 2px solid #888; }
.o-outer { margin-left: auto; width: 9px; border-left: 1px solid #fff; }
.o-outer .up { width: 9px; height: 6px; line-height: 3px; border-right: 0; }
.o-outer .thumb { display: block; height: 299px; border-bottom: 1px solid #777; }
```
FILE: script.js
```js
const use = (id, cls = "") => `<svg class="line ${cls}"><use href="#${id}"/></svg>`;

// Browser tabs
const tabs = [
  ["swagger", "Swagge"], ["globe", "sigebim"], ["swagger", "Swagge"], ["swagger", "Swagge"],
  ["whatsapp", "(2) Wha"], ["teams", "Unirse a"], ["drive", "Adminis"], ["sheets", "Proceso"],
  ["sheets", "Indep_S"], ["sheets", "INDEP_"], ["sheets", "INDEP_"], ["sheets", "INDEP_"],
  ["sheets", "INDEP_"], ["github", "[Vista p"], ["drive", "FCOME"]
];
document.getElementById("tabs").innerHTML = tabs.map(([icon, text]) => {
  const mark = icon === "whatsapp" ? "<b>2</b>" : "";
  return `<div class="tab"><span class="wa"><svg class="ico20"><use href="#${icon}"/></svg>${mark}</span><span class="tab-text">${text}</span></div>`;
}).join("");

// Meeting window: title bar and call toolbar
const btn = (icon, text, cls = "") => `<div class="t-btn ${cls}">${use(icon)}${text}</div>`;
const teamsTitle = `<div class="t-title"><span>Dudas Fábrica SW</span>${use("min")}${use("max")}${use("close")}</div>`;
const teamsBar = time => `<div class="t-bar"><div class="t-left">${use("shield")}<i class="rec"></i>${time}</div>
${btn("control", "Controlar", "t-off")}${btn("popout", "Separar")}<i class="t-div"></i>
${btn("chat", "Chat")}${btn("people", "Gente")}${btn("hand", "Participar", "w71")}${btn("smile", "Reaccionar", "w76")}${btn("gridview", "Vista", "w72")}${btn("dots", "Más", "w68")}<i class="t-div"></i>
${btn("camera", "Cámara", "t-cam")}${btn("mic", "Micro", "t-on")}${btn("upload", "Compartir", "t-on w74")}
<div class="t-leave">${use("hangup")}Salir</div></div>`;
document.querySelectorAll("[data-teams]").forEach(w => {
  const time = w.classList.contains("teams-mid") ? "18:00" : "22:07";
  w.insertAdjacentHTML("afterbegin", teamsTitle + (w.dataset.teams === "full" ? teamsBar(time) : '<div class="t-bar"></div>'));
});
document.querySelectorAll(".t-cam svg").forEach(s => s.classList.add("t-off"));

// Spreadsheet window
const launcher = `<svg class="launch line" viewBox="0 0 11 11"><path d="M1 9V1h8M4 4l6 6M10 5v5H5"/></svg>`;
const tableIcon = `<svg class="line" viewBox="0 0 36 36"><path d="M1 1h34v34H1zM1 8h34M12 1v34M24 1v34" /><path d="M12 3h12v4H12z" fill="#999"/></svg>`;
const header = `
<div class="x-title"><svg class="ico20"><use href="#excel"/></svg><span class="auto">Autoguardado</span><div class="toggle"><i></i></div>${use("save", "x-save")}<span class="x-name">asignaciones</span>${use("chev", "x-chev")}
<div class="x-search">${use("search")}Buscar</div><span class="x-user">Fernando Alfonso Zhunio Reyes</span><div class="x-fa">FA</div>${use("pen", "x-pen")}${use("min", "x-ctl")}${use("restore", "x-ctl")}${use("close", "x-ctl")}</div>
<div class="x-tabs"><span>Archivo</span><span class="active">Inicio</span><span>Insertar</span><span>Disposición de página</span><span>Fórmulas</span><span>Datos</span><span>Revisar</span><span>Vista</span><span>Automatizar</span><span>Ayuda</span>
<div class="x-btn x-comment">${use("bubble")}Comentarios</div><div class="x-btn x-share">${use("share")}Compartir${use("chev", "sm")}</div></div>
<div class="ribbon">
<div class="grp g-undo"><div class="r">${use("undo")}${use("chev", "sm")}</div><div class="r faint">${use("redo")}${use("chev", "sm")}</div><div class="lbl">Deshacer</div></div>
<div class="grp g-clip"><div class="cols"><div class="paste"><svg viewBox="0 0 36 38"><path d="M2 5h27v30H2z" fill="#fde9c8" stroke="#d9882b" stroke-width="2"/><path d="M6 9h19v22H6z" fill="#fff"/><path d="M8 4h4c0-4 7-4 7 0h4v5H8z" fill="#fff" stroke="#666"/><path d="M18 15h17v22H18z" fill="#fff" stroke="#555" stroke-width="1.500"/></svg>Pegar${use("chev", "sm")}</div>
<div class="tools"><div><svg viewBox="0 0 20 20"><path d="M6 0l6 13M14 0L8 13" stroke="#444" stroke-width="1.200"/><circle cx="6.500" cy="16" r="2.700" stroke="#2b83c6" stroke-width="1.500"/><circle cx="13.500" cy="16" r="2.700" stroke="#2b83c6" stroke-width="1.500"/></svg></div>
<div><svg class="line" viewBox="0 0 20 20"><path d="M8 16H1V1h10v3M7 5h7l5 5v9H7zM14 5v5h5M10 13h6M10 16h6"/></svg>${use("chev", "sm")}</div>
<div><svg viewBox="0 0 20 20"><path d="M1 11l7-4 6 6-5 6-3-1 1-2-3 1z" fill="#f5b266" stroke="#d9882b"/><path d="M8 7l6 6 2-2-2-2 5-6-2-2-5 5-2-2z" fill="#fff" stroke="#444" stroke-width="1.200"/></svg></div></div></div><div class="lbl">Portapapeles${launcher}</div></div>
<div class="grp g-font"><div class="r1"><div class="combo a">Calibri${use("chev", "sm")}</div><div class="combo b">8${use("chev", "sm")}</div><span class="bigA">A${use("chev")}</span><span class="smA">A${use("chev")}</span></div>
<div class="r2"><span class="k">K</span><span class="u">S</span>${use("chev", "sm c1")}<i></i><svg class="bord" viewBox="0 0 20 20"><path d="M1 1h18v17H1zM10 1v17M1 9.500h18" stroke="#888" stroke-dasharray="1.500 1.500"/><path d="M1 19h18" stroke="#888" stroke-width="1.600"/></svg>${use("chev", "sm faint c2")}<i></i><svg class="fill" viewBox="0 0 20 22"><path d="M8 3l7 7-6 5-6-6zM8 3V0M15 5c2 2 3 4 2 6" stroke="#8d8d8d" stroke-width="1.300"/><path d="M0 17h20v5H0z" fill="#bdbdbd"/></svg>${use("chev", "sm faint c2")}<span class="fcol">A</span>${use("chev", "sm c2")}</div>
<div class="lbl">Fuente${launcher}</div></div>
<div class="grp g-al"><svg viewBox="0 0 60 80"><path d="M1 1h18M4 7h12M1 13h18M33 5h18M36 11h12M33 17h18M1 41h18M1 47h12M1 53h18M1 59h12M33 41h18M36 47h12M33 53h18M36 59h12"/></svg></div>
<div class="grp g-num"><i></i></div>
<div class="grp g-sty"><div>${tableIcon}${tableIcon}${tableIcon}</div></div>
<div class="grp g-cell"><div><svg class="line" width="20" height="18" viewBox="0 0 20 18"><path d="M1 1h18v16H1zM1 7h18M7 1v16M13 1v16"/></svg>Insertar</div></div>
<div class="grp g-edit"><div><svg viewBox="0 0 26 30"><path d="M22 6V2H4l9 10L4 22h18"/></svg><svg viewBox="0 0 26 30"><path d="M6 15L12 3l6 12M8 11h8" stroke="#999"/></svg><svg viewBox="0 0 26 30"><circle cx="13" cy="13" r="11"/></svg></div></div>
<div class="grp g-pic"><svg viewBox="0 0 40 32"><path d="M1 1h38v26H1z" fill="#b5b5b5" stroke="#555" stroke-width="2"/><path d="M1 7h38" stroke="#555"/><circle cx="20" cy="16" r="11" fill="#eee" stroke="#555" stroke-width="2"/><circle cx="20" cy="16" r="6" stroke="#555" stroke-width="2"/></svg></div>
${use("chev", "collapse")}</div>
<div class="formula"><div class="f-name"></div><div class="f-text"><span>esperando que el endpoint /survillance/</span>${use("chev")}</div></div>`;
const rows = [
  [23.5, "mbio a numerario", "good,"], [119.5, "Consulta de Depósitos SIRSAE", "", "c"], [35, "Generación Masiva LC´s", "", "c"],
  [26, "", "", "y"], [34.5, "ortes de Pólizas", "policy"], [52, "centajes (Supervisión y Vigilancia)", "survil"],
  [35, "arios Administradores", "users"], [52, "citudes", "super"], [52, "acora", "survil"], [60, "", ""]
];
const grid = rows.map(([h, a, b, k]) => `<div class="row ${k === "y" ? k : ""}" style="height:${h}px"><span class="${k === "c" ? "c" : ""}">${a}</span><span>${b}</span></div>`).join("");
document.querySelectorAll("[data-excel]").forEach(w => {
  const cells = w.dataset.excel === "front" ? grid : "";
  w.innerHTML = header + `<div class="sheet"><div class="cells"><div class="colhead"><span>B</span><span></span></div>${cells}</div><div class="vscroll"><b></b><i></i></div></div>`;
});

// Oracle toolbar: [left margin, width, drawing, white face]
const tri = x => `<path d="M${x + 4} 3v9l-4-4.500z" fill="#1212c8"/>`, trr = x => `<path d="M${x} 3v9l4-4.500z" fill="#1212c8"/>`;
const toolset = [
  [0, 16, '<circle cx="8" cy="7" r="4.500" fill="#dff" stroke="#223"/><path d="M5 7h6M8 4v6M11 11l3 3M3 13h9" stroke="#1a1a9a" stroke-width="1.400"/>'],
  [18, 15, tri(3) + tri(8), 1], [1, 15, tri(5), 1], [2, 15, trr(6), 1], [2, 16, trr(3) + trr(8), 1],
  [15, 21, '<circle cx="7" cy="6" r="3.500" fill="#b8b04a" stroke="#333"/><path d="M11 4h4v3h-3v2M14 11h4v2" stroke="#2a2ac0" stroke-width="1.400"/><path d="M5 10h4v3H5z" fill="#333"/>'],
  [16, 14, '<path d="M2 2h11v11H2z" fill="#111"/><path d="M4 2h7v5H4z" fill="#e5e04a"/><path d="M5 9h5v4H5z" fill="#ddd"/>'],
  [2, 15, '<path d="M8 3v10M3 8h10" stroke="#0a8a2a" stroke-width="3"/>', 1], [1, 15, '<path d="M4 4l7 8M11 4l-7 8" stroke="#c01212" stroke-width="2.600"/>'],
  [11, 14, '<path d="M2 3l7 7 3-3-7-6z" fill="#e0d030"/><path d="M7 7l3 3-2 2-3-3z" fill="#c22"/><path d="M8 13h5" stroke="#111"/>', 1], [2, 14, '<path d="M4 3h8v11H4z" fill="#ececec" stroke="#888"/><path d="M6 2h4v2H6z" fill="#777"/>'],
  [8, 14, '<path d="M3 1h8v12H3z" fill="#c81414"/><path d="M9 1h2v12H9z" fill="#111"/>'],
  [8, 14, '<path d="M2 2h6v5H2z" fill="#223fc0"/><path d="M5 6l7 8M12 6l-7 8" stroke="#c01212" stroke-width="2.200"/>'], [2, 14, '<path d="M2 2h8v7H2z" fill="#b04848" stroke="#222"/><path d="M5 5h8v8H5z" fill="#c77" stroke="#222"/>'],
  [2, 15, '<path d="M4 5c0-4 7-4 7 0 0 2.500-3.500 2-3.500 5M7.500 11.500V14" stroke="#1818b0" stroke-width="2.200"/>'], [5, 15, '<path d="M3 10h10v3H3z" fill="#111"/><path d="M5 12h6v2H5z" fill="#2a7a3a"/>']
];
document.getElementById("tools").innerHTML = toolset.map(([m, w, d, white]) => `<svg viewBox="0 0 ${w} 15" style="margin-left:${m}px;width:${w}px${white ? ";background:#fff" : ""}">${d}</svg>`).join("");

// Log entries
const Q = "Que se permita generar de nueva cuenta los aleatorios relativos al proceso de", C = "Cambiar bienes de número de aleatori";
const E = "Eliminar Periodos", P = "Cambio de Periodos", OC = "DELEGACIÓN REGIONAL OCCIDENTE", BC = "DELEGACIÓN REGIONAL BAJA CALIFORN", CS = "DELEGACIÓN REGIONAL CENTRO SUR";
const R = "ROGARCIA", O1 = "OST12581", O3 = "OST13146", M = "MROSAS", J = "JACALDEROI";
const log = [
  [8, "01/08/2017", "09/08/2017", C, Q, R, O1, M, 6, OC], [9, "01/08/2017", "09/08/2017", C, Q, R, O1, M, 6, OC],
  [10, "01/08/2017", "09/08/2017", C, Q, R, O1, M, 6, OC], [11, "01/08/2017", "09/08/2017", C, Q, R, O1, M, 6, OC],
  [12, "01/09/2017", "01/09/2017", E, "Se va a generar el listado de aleatorios sin direccion, para saber si eso esta oc", R, O1, M, 6, OC],
  [13, "08/11/2017", "09/11/2017", E, "Por un error involuntario se cargo un Padron de Bienes equivocado", R, O1, M, 6, OC],
  [14, "17/01/2018", "17/01/2018", P, "A solicitud de la DRBC se generan los aleatorios en razón de que el sistema n", M, M, "", 1, BC],
  [15, "18/01/2018", "18/01/2018", P, "A SOLICITUD DE LA DRS SE GENERAN LOS ALEATORIOS, EN RAZON DE QUE", M, M, M, 9, "DELEGACIÓN REGIONAL SURESTE"],
  [16, "18/01/2018", "18/01/2018", P, "A SOLICITUD DE LA DRCS, SE GENERAN LOS ALEATORIOS, EN RAZON DE QU", M, M, M, 12, CS],
  [17, "18/01/2018", "18/01/2018", P, "A SOLICITU DE LA DRCS SE GENERAN LOS ALEATORIOS, EN RAZON DE QUE", M, M, M, 12, CS],
  [18, "27/03/2018", "27/03/2018", E, "archivo erroneo", M, O3, J, 1, BC], [19, "27/03/2018", "27/03/2018", P, "archivo erroneo", O3, O3, J, 1, BC],
  [20, "27/03/2018", "27/03/2018", E, "archivo erroneo", "PDAVILA", O3, J, 1, BC],
  [21, "06/08/0208", "06/08/2018", E, "ERROR EN EL ARCHIVO DE VALIDACIÓN", "ESALAS", O3, J, 3, "DELEGACIÓN REGIONAL NORTE"],
  [23, "30/08/2018", "30/08/2018", "Eliminar Periodos FERRONALES con ap", "A SOLICITUD DE LA CABI", O3, "SERA", J, 0, ""],
  [24, "13/12/2018", "13/12/2018", "Eliminar Periodo 201011 por inconsiste", "A SOLICITUD DE LA DRG", "PFLORESL", "SERA", J, 8, "DELEGACIÓN REGIONAL GOLFO"],
  [25, "27/06/2019", "27/06/2019", "Eliminar Aleatorio Delegación Regiona", "A SOLICITUD DE LA CABI", O3, "SERA", J, 10, "DELEGACIÓN REGIONAL PENINSULAR"],
  [26, "03/09/2019", "03/09/2019", "Eliminar Periodos FERRONALES con ap", "A SOLICITUD DE LA CABI", O3, "SERA", J, 0, ""],
  ["", "", "", "", "", "", "", "", "", ""]
];
document.getElementById("rows").innerHTML = log.map(r => `<div class="o-row">${r.map(c => `<span>${c}</span>`).join("")}</div>`).join("");
```
